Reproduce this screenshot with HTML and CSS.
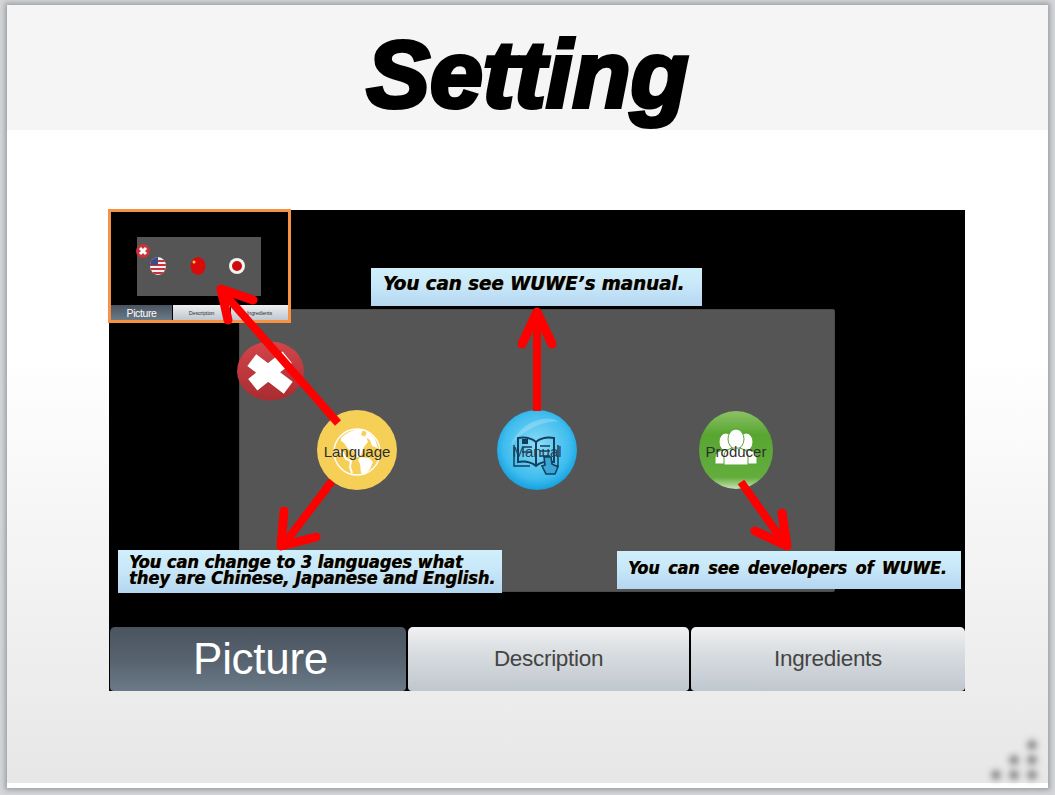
FILE: index.html
```html
<!DOCTYPE html>
<html lang="en">
<head>
<meta charset="utf-8">
<title>Setting</title>
<link rel="stylesheet" href="styles.css">
</head>
<body>
<main class="slide">
  <header class="slide-head"><h1 class="slide-title">Setting</h1></header>
  <section class="stage">
    <div class="stage-top">
      <div class="panel">
        <div class="round round-lang">
          <svg class="round-art" viewBox="0 0 80 80">
            <circle cx="40" cy="40" r="40" fill="#f6cf57"/>
            <circle cx="40" cy="42" r="23" fill="none" stroke="#fff" stroke-width="1.4"/>
            <path d="M24 28c7-7 15-9 22-9l-2 6 5 2 2 5-4 5-3 8-5 3-1-6-7-3-4-6-3-2zM43 47l9 1 4 4-3 7-6 6-3-2-1-9-2-4zM50 21l8 8 3 9-6-2-2-6-5-3z" fill="#fff"/>
            <path d="M20 40l6 3 3 6 5 2-1 6 2 6" fill="none" stroke="#fff" stroke-width="2"/>
          </svg>
          <span class="round-label">Language</span>
        </div>
        <div class="round round-manual">
          <svg class="round-art" viewBox="0 0 80 80">
            <defs>
              <radialGradient id="blueBall" cx="50%" cy="45%" r="58%">
                <stop offset="0" stop-color="#8fdcf6"/>
                <stop offset=".72" stop-color="#3dbcee"/>
                <stop offset="1" stop-color="#0c9bdc"/>
              </radialGradient>
            </defs>
            <circle cx="40" cy="40" r="40" fill="url(#blueBall)"/>
            <path d="M14 36C20 14 50 2 62 12 50 10 26 18 14 36z" fill="#fff" opacity=".22"/>
            <path d="M39 32c-5-4-12-5-18-4v24c6-1 13 0 18 4 5-4 12-5 18-4V28c-6-1-13 0-18 4zM39 32v24" fill="none" stroke="#123f5e" stroke-width="2"/>
            <path d="M17 35v21h16M61 35v21H45M25 37h10M25 42h10M43 36h10M43 41h10M43 46h10" fill="none" stroke="#123f5e" stroke-width="1.5"/>
            <rect x="25" y="29" width="6" height="5" fill="#123f5e"/>
            <path d="M47 47l1 8-3 1 4 8h9l3-7-6-3-1-7z" fill="#3aa6d6" stroke="#123f5e" stroke-width="1.6"/>
          </svg>
          <span class="round-label">Manual</span>
        </div>
        <div class="round round-prod">
          <svg class="round-art" viewBox="0 0 74 80">
            <defs>
              <linearGradient id="greenBall" x1="0" y1="0" x2="0" y2="1">
                <stop offset="0" stop-color="#8cc265"/>
                <stop offset=".3" stop-color="#58a632"/>
                <stop offset=".85" stop-color="#63ad3c"/>
                <stop offset="1" stop-color="#c8e2b4"/>
              </linearGradient>
            </defs>
            <ellipse cx="37" cy="40" rx="37" ry="39" fill="url(#greenBall)"/>
            <g fill="#fff" stroke="#5aa636" stroke-width="1">
              <ellipse cx="27" cy="32" rx="7" ry="9"/>
              <ellipse cx="47" cy="32" rx="7" ry="9"/>
              <path d="M16 54v-6c0-6 5-8 11-8s10 2 10 8v6zM37 54v-6c0-6 4-8 10-8s11 2 11 8v6z"/>
              <ellipse cx="37" cy="29" rx="8" ry="10"/>
              <path d="M25 55v-9c0-6 6-8 12-8s12 2 12 8v9z"/>
            </g>
          </svg>
          <span class="round-label">Producer</span>
        </div>
      </div>
    </div>
    <nav class="tabs">
      <div class="tab tab-active">Picture</div>
      <div class="tab tab-desc">Description</div>
      <div class="tab tab-ingr">Ingredients</div>
    </nav>

    <div class="close-big">
      <svg viewBox="0 0 68 60">
        <defs>
          <linearGradient id="redBall" x1="0" y1="0" x2="0" y2="1">
            <stop offset="0" stop-color="#d2454b"/>
            <stop offset="1" stop-color="#a92c30"/>
          </linearGradient>
        </defs>
        <ellipse cx="34" cy="30" rx="34" ry="30" fill="url(#redBall)"/>
        <path d="M15 19L52 47M51 16L16 44" fill="none" stroke="#fff" stroke-width="15"/>
      </svg>
    </div>

    <div class="thumb">
      <div class="thumb-top">
        <div class="thumb-panel">
          <svg class="thumb-art" viewBox="0 0 124 59">
            <defs>
              <clipPath id="usClip"><ellipse cx="21" cy="29" rx="8" ry="9"/></clipPath>
            </defs>
            <g clip-path="url(#usClip)">
              <rect x="13" y="20" width="16" height="18" fill="#f0f0f0"/>
              <path d="M13 24h16M13 28h16M13 32h16M13 36h16" stroke="#c8303a" stroke-width="2"/>
              <rect x="13" y="20" width="8" height="8" fill="#3c4a86"/>
            </g>
            <ellipse cx="61" cy="29" rx="7.5" ry="9" fill="#d80a0a"/>
            <circle cx="57" cy="25" r="1.5" fill="#f4d03f"/>
            <circle cx="100" cy="29" r="8" fill="#f2f2f2"/>
            <circle cx="100" cy="29" r="5" fill="#cc0a0a"/>
            <circle cx="6" cy="14" r="7" fill="#c8343a"/>
            <path d="M3 11l6 6M9 11l-6 6" stroke="#fff" stroke-width="3"/>
          </svg>
        </div>
      </div>
      <div class="thumb-tabs">
        <div class="thumb-tab thumb-tab-active">Picture</div>
        <div class="thumb-tab">Description</div>
        <div class="thumb-tab">Ingredients</div>
      </div>
    </div>

    <p class="note note-manual">You can see WUWE’s manual.</p>
    <p class="note note-lang">You can change to 3 languages what<br>they are Chinese, Japanese and English.</p>
    <p class="note note-prod">You can see developers of WUWE.</p>
  </section>
  <div class="dots">
    <i></i><i></i><i></i><i></i><i></i><i></i>
  </div>
</main>
<svg class="arrows" viewBox="0 0 1055 795">
  <g fill="none" stroke="#ff0000" stroke-linecap="round" stroke-linejoin="round">
    <g stroke-width="8" stroke-linecap="butt">
      <path d="M338 423L222 291"/>
      <path d="M537 411V314"/>
      <path d="M332 481L285 543"/>
      <path d="M741 482L785 544"/>
    </g>
    <g stroke-width="9">
      <path d="M228 320L221 289L253 300"/>
      <path d="M522 344L537 312L552 344"/>
      <path d="M284 511L281 546L316 537"/>
      <path d="M782 513L787 546L755 531"/>
    </g>
  </g>
</svg>
</body>
</html>
```

FILE: styles.css
```css
* { box-sizing: border-box; }
html, body { margin: 0; height: 100%; }
body {
  position: relative;
  width: 1055px;
  height: 795px;
  overflow: hidden;
  padding: 5px 7px 0;
  background: #d4d6d8;
  font-family: "Liberation Sans", Arial, sans-serif;
}
.slide {
  position: relative;
  width: 1041px;
  height: 783px;
  border-bottom: 5px solid #fff;
  background: linear-gradient(180deg, #fff 0, #fff 45%, #e7e7e7 100%);
  box-shadow: 0 0 5px 2px #9a9ea3;
}
.slide-head {
  height: 125px;
  display: flex;
  justify-content: center;
  align-items: flex-start;
  background: #f5f5f5;
}
.slide-title {
  margin: 19px 0 0;
  font-family: "Liberation Sans", sans-serif;
  font-style: italic;
  font-weight: 700;
  font-size: 95px;
  line-height: 100px;
  color: #000;
  -webkit-text-stroke: 4px #000;
}
.stage {
  position: relative;
  width: 856px;
  height: 481px;
  margin: 80px 0 0 102px;
  background: #000;
  display: flex;
  flex-direction: column;
}
.stage-top { flex: 1; padding: 99px 0 0 130px; }
.panel {
  width: 596px;
  height: 283px;
  background: #555;
  border-radius: 3px;
  box-shadow: inset 0 0 0 1px #4a4a4a;
  display: flex;
  align-items: flex-start;
  padding: 101px 0 0 78px;
}
.round { position: relative; height: 80px; flex: none; }
.round-lang { width: 80px; margin-right: 100px; }
.round-manual { width: 80px; margin-right: 122px; }
.round-prod { width: 74px; }
.round-art { display: block; width: 100%; height: 100%; filter: blur(.4px); }
.round-label {
  position: absolute;
  inset: 2px 0 0;
  display: flex;
  align-items: center;
  justify-content: center;
  font-size: 15px;
  color: #2e2e2e;
  white-space: nowrap;
}
.round-manual .round-label { color: #1e4058; }
.tabs {
  display: flex;
  height: 64px;
  margin-left: 1px;
  gap: 2px;
}
.tab {
  display: flex;
  align-items: center;
  justify-content: center;
  border-radius: 5px 5px 4px 4px;
  background: linear-gradient(180deg, #f0f1f2 0, #d9dde0 40%, #bfc7cf 100%);
  color: #444;
  font-size: 22.5px;
  letter-spacing: -.3px;
}
.tab-active {
  width: 296px;
  background: linear-gradient(180deg, #4a5460 0, #56626e 50%, #6b7a88 100%);
  color: #fff;
  font-size: 44px;
  letter-spacing: -.3px;
  padding-left: 5px;
}
.tab-desc { width: 281px; }
.tab-ingr { width: 274px; }
.close-big {
  position: absolute;
  left: 128px;
  top: 131px;
  width: 67px;
  height: 60px;
}
.close-big svg { display: block; width: 100%; height: 100%; }
.thumb {
  position: absolute;
  left: -1px;
  top: -1px;
  width: 183px;
  height: 114px;
  border: 3px solid #f79144;
  background: #000;
  display: flex;
  flex-direction: column;
}
.thumb-top { flex: 1; padding: 25px 0 0 26px; }
.thumb-panel { width: 124px; height: 59px; background: #555; }
.thumb-art { display: block; width: 124px; height: 59px; overflow: visible; filter: blur(.3px); }
.thumb-tabs { display: flex; height: 15px; }
.thumb-tab {
  flex: 1;
  display: flex;
  align-items: center;
  justify-content: center;
  background: linear-gradient(180deg, #eef0f1, #bfc7cf);
  color: #333;
  font-size: 5.5px;
  letter-spacing: -.2px;
  margin-left: 1px;
}
.thumb-tab-active {
  flex: none;
  width: 61px;
  margin-left: 0;
  background: linear-gradient(180deg, #4a5460, #6b7a88);
  color: #fff;
  font-size: 10.5px;
  letter-spacing: -.4px;
}
.note {
  position: absolute;
  margin: 0;
  background: linear-gradient(180deg, #d0effc 0, #c8e8f9 45%, #b4d6f0 100%);
  color: #000;
  font-family: "DejaVu Sans Condensed", "DejaVu Sans", sans-serif;
  font-stretch: condensed;
  font-style: italic;
  font-weight: 700;
  white-space: nowrap;
  text-shadow: .6px 0 0 #6b4300;
}
.note-manual {
  left: 262px; top: 58px; width: 331px; height: 38px;
  padding: 3px 0 0 12px;
  line-height: 25px;
  font-size: 20.3px;
}
.note-lang {
  left: 9px; top: 340px; width: 384px; height: 43px;
  padding: 4px 0 0 11px;
  line-height: 16px;
  font-size: 18px;
}
.note-prod {
  left: 508px; top: 341px; width: 344px; height: 38px;
  padding: 5px 0 0 11px;
  line-height: 25px;
  font-size: 17.7px;
  word-spacing: 3px;
}
.dots {
  position: absolute;
  right: 11px;
  bottom: 3px;
  width: 46px;
  height: 40px;
  display: grid;
  grid-template-columns: repeat(3, 10px);
  grid-template-rows: repeat(3, 10px);
  gap: 5px 8px;
  filter: blur(3px);
}
.dots i { background: #8a8a8a; border-radius: 50%; }
.dots i:nth-child(1) { grid-area: 1 / 3; }
.dots i:nth-child(2) { grid-area: 2 / 2; }
.dots i:nth-child(3) { grid-area: 2 / 3; }
.dots i:nth-child(4) { grid-area: 3 / 1; }
.dots i:nth-child(5) { grid-area: 3 / 2; }
.dots i:nth-child(6) { grid-area: 3 / 3; }
.arrows {
  position: absolute;
  left: 0;
  top: 0;
  width: 1055px;
  height: 795px;
  pointer-events: none;
}
```
